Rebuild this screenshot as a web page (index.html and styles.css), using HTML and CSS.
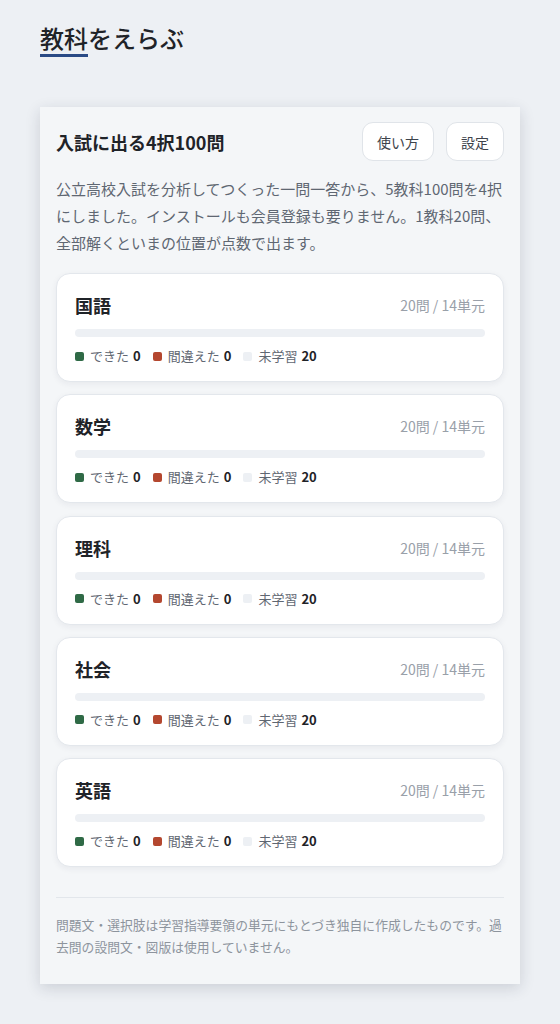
FILE: index.html
```html
<!DOCTYPE html>
<html lang="ja">
<head>
    <meta charset="UTF-8">
    <meta name="viewport" content="width=device-width, initial-scale=1.0">
    <title>教科をえらぶ</title>
    <link rel="stylesheet" href="styles.css">
</head>
<body>
    <h1 class="page-title"><span class="accent">教科</span>をえらぶ</h1>

    <div class="panel">
        <div class="panel-head">
            <h2>入試に出る4択100問</h2>
            <div class="actions">
                <button>使い方</button>
                <button>設定</button>
            </div>
        </div>
        <p class="lead">公立高校入試を分析してつくった一問一答から、5教科100問を4択にしました。インストールも会員登録も要りません。1教科20問、全部解くといまの位置が点数で出ます。</p>

        <div class="subjects">
            <div class="card">
                <div class="card-head">
                    <h3>国語</h3>
                    <span class="meta">20問 / 14単元</span>
                </div>
                <div class="bar"></div>
                <div class="legend">
                    <span><i class="dot ok"></i>できた <b>0</b></span>
                    <span><i class="dot ng"></i>間違えた <b>0</b></span>
                    <span><i class="dot todo"></i>未学習 <b>20</b></span>
                </div>
            </div>
            <div class="card">
                <div class="card-head">
                    <h3>数学</h3>
                    <span class="meta">20問 / 14単元</span>
                </div>
                <div class="bar"></div>
                <div class="legend">
                    <span><i class="dot ok"></i>できた <b>0</b></span>
                    <span><i class="dot ng"></i>間違えた <b>0</b></span>
                    <span><i class="dot todo"></i>未学習 <b>20</b></span>
                </div>
            </div>
            <div class="card">
                <div class="card-head">
                    <h3>理科</h3>
                    <span class="meta">20問 / 14単元</span>
                </div>
                <div class="bar"></div>
                <div class="legend">
                    <span><i class="dot ok"></i>できた <b>0</b></span>
                    <span><i class="dot ng"></i>間違えた <b>0</b></span>
                    <span><i class="dot todo"></i>未学習 <b>20</b></span>
                </div>
            </div>
            <div class="card">
                <div class="card-head">
                    <h3>社会</h3>
                    <span class="meta">20問 / 14単元</span>
                </div>
                <div class="bar"></div>
                <div class="legend">
                    <span><i class="dot ok"></i>できた <b>0</b></span>
                    <span><i class="dot ng"></i>間違えた <b>0</b></span>
                    <span><i class="dot todo"></i>未学習 <b>20</b></span>
                </div>
            </div>
            <div class="card">
                <div class="card-head">
                    <h3>英語</h3>
                    <span class="meta">20問 / 14単元</span>
                </div>
                <div class="bar"></div>
                <div class="legend">
                    <span><i class="dot ok"></i>できた <b>0</b></span>
                    <span><i class="dot ng"></i>間違えた <b>0</b></span>
                    <span><i class="dot todo"></i>未学習 <b>20</b></span>
                </div>
            </div>
        </div>

        <p class="note">問題文・選択肢は学習指導要領の単元にもとづき独自に作成したものです。過去問の設問文・図版は使用していません。</p>
    </div>
</body>
</html>
```

FILE: styles.css
```css
body {
    font-family: "Noto Sans CJK JP", "Noto Sans", sans-serif;
    background-color: #edf0f4;
    color: #1f2328;
    margin: 0;
    padding: 22px 40px 40px;
}
.page-title {
    margin: 0 0 50px;
    font-size: 24px;
    font-weight: 500;
    line-height: 32px;
}
.accent {
    display: inline-block;
    line-height: 32px;
    border-bottom: 3px solid #2a4a85;
}
.panel {
    background-color: #f4f6f8;
    padding: 15px 16px 26px;
    box-shadow: 0 4px 14px rgba(30, 40, 60, 0.16);
}
.panel-head {
    display: flex;
    align-items: center;
    justify-content: space-between;
}
.panel-head h2 {
    margin: 0;
    font-size: 18px;
    font-weight: 700;
}
.actions {
    display: flex;
    gap: 12px;
}
.actions button {
    font-family: inherit;
    font-size: 14px;
    color: #3d434b;
    height: 39px;
    padding: 0 14px;
    background-color: #fff;
    border: 1px solid #e0e4e9;
    border-radius: 11px;
}
.lead {
    margin: 14px 0 17px;
    font-size: 15px;
    line-height: 27px;
    color: #5f6772;
}
.subjects {
    display: flex;
    flex-direction: column;
    gap: 12.25px;
}
.card {
    background-color: #fff;
    border: 1px solid #e3e7ec;
    border-radius: 14px;
    padding: 19px 18px 15px;
    box-shadow: 0 2px 6px rgba(30, 40, 60, 0.06);
}
.card-head {
    display: flex;
    align-items: center;
    justify-content: space-between;
    height: 24px;
}
.card-head h3 {
    margin: 0;
    font-size: 18px;
    font-weight: 700;
}
.meta {
    font-size: 14px;
    color: #99a0a9;
}
.bar {
    height: 8px;
    margin-top: 12px;
    border-radius: 4px;
    background-color: #edf0f4;
}
.legend {
    display: flex;
    gap: 12px;
    margin-top: 9px;
    font-size: 13px;
    line-height: 20px;
    color: #5f6772;
}
.legend span {
    display: flex;
    align-items: center;
}
.legend b {
    color: #1f2328;
    margin-left: 4px;
}
.dot {
    width: 9px;
    height: 9px;
    border-radius: 2px;
    margin-right: 6px;
}
.dot.ok {
    background-color: #2f6a46;
}
.dot.ng {
    background-color: #b4472f;
}
.dot.todo {
    background-color: #edf0f4;
}
.note {
    margin: 30px 0 0;
    padding-top: 16px;
    border-top: 1px solid #e2e6eb;
    font-size: 12.8px;
    line-height: 22px;
    color: #8d949d;
}
```
